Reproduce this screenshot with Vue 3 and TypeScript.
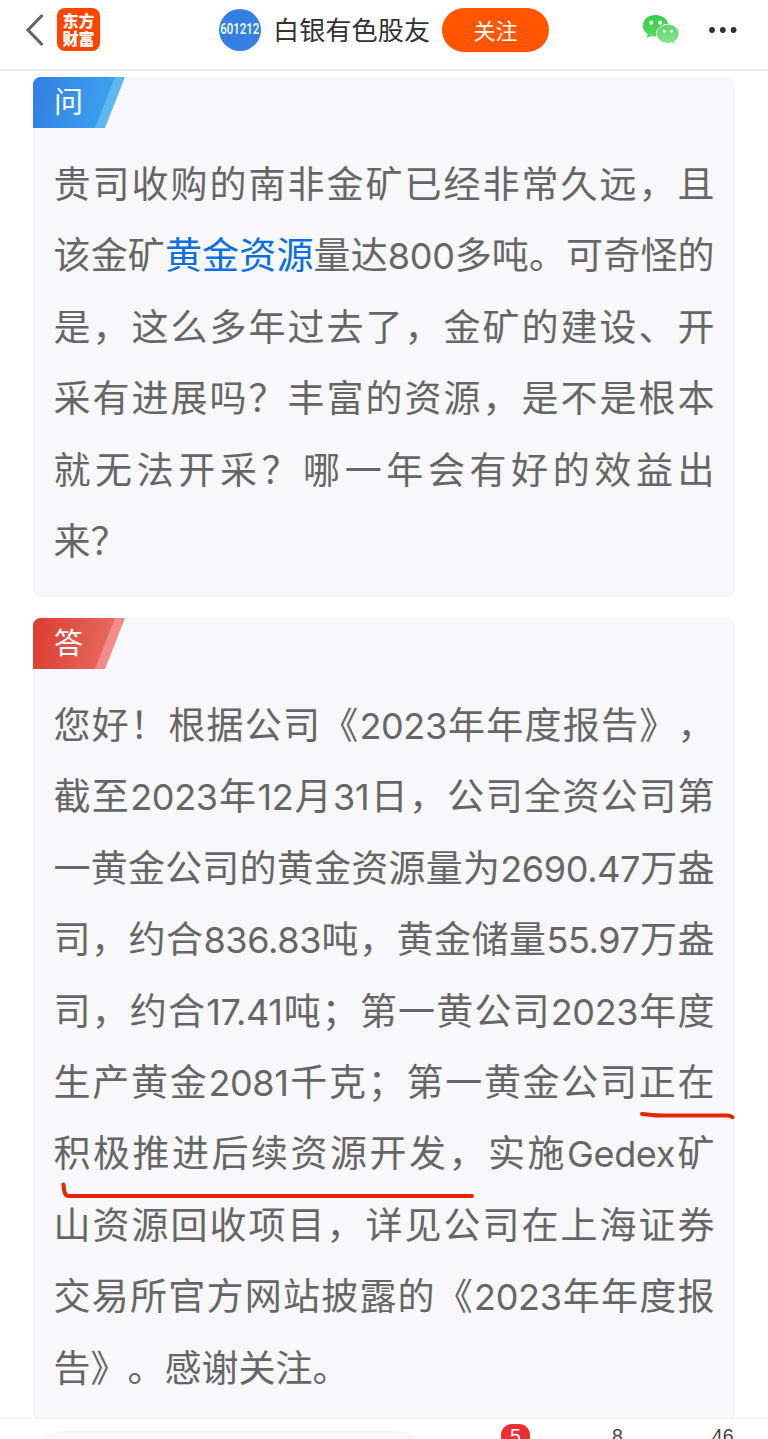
<script setup lang="ts">
interface Segment {
  text: string
  kind: 'cjk' | 'latin' | 'link'
}
interface Line {
  segments: Segment[]
  loose: boolean
}

// Digits and Latin words get their own run; text in [brackets] is a link.
function toLine(source: string, loose = false): Line {
  const parts = source.match(/\[[^\]]+\]|[A-Za-z0-9.]+|[^A-Za-z0-9.[\]]+/g) ?? []
  const segments = parts.map((part): Segment => {
    if (part.startsWith('[')) return { text: part.slice(1, -1), kind: 'link' }
    return { text: part, kind: /^[A-Za-z0-9]/.test(part) ? 'latin' : 'cjk' }
  })
  return { segments, loose }
}

const question: Line[] = [
  toLine('贵司收购的南非金矿已经非常久远，且'),
  toLine('该金矿[黄金资源]量达800多吨。可奇怪的'),
  toLine('是，这么多年过去了，金矿的建设、开'),
  toLine('采有进展吗？丰富的资源，是不是根本'),
  toLine('就无法开采？哪一年会有好的效益出'),
  toLine('来？', true),
]

const answer: Line[] = [
  toLine('您好！根据公司《2023年年度报告》，'),
  toLine('截至2023年12月31日，公司全资公司第'),
  toLine('一黄金公司的黄金资源量为2690.47万盎'),
  toLine('司，约合836.83吨，黄金储量55.97万盎'),
  toLine('司，约合17.41吨；第一黄公司2023年度'),
  toLine('生产黄金2081千克；第一黄金公司正在'),
  toLine('积极推进后续资源开发，实施Gedex矿'),
  toLine('山资源回收项目，详见公司在上海证券'),
  toLine('交易所官方网站披露的《2023年年度报'),
  toLine('告》。感谢关注。', true),
]
</script>

<template>
  <div class="page">
    <header class="top">
      <svg class="back" width="20" height="34" viewBox="0 0 20 34"><path d="M17.500 2 3 17l14.500 15" /></svg>
      <div class="logo"><span>东方</span><span>财富</span></div>
      <div class="avatar"><span>601212</span></div>
      <div class="name">白银有色股友</div>
      <button class="follow">关注</button>
      <svg class="wechat" width="38" height="32" viewBox="0 0 38 32">
        <defs>
          <linearGradient id="wg1" x1="0" y1="0" x2="0" y2="1"><stop offset="0" stop-color="#32cb45" /><stop offset="1" stop-color="#5bd967" /></linearGradient>
          <linearGradient id="wg2" x1="0" y1="0" x2="0" y2="1"><stop offset="0" stop-color="#5ed66b" /><stop offset="1" stop-color="#8be692" /></linearGradient>
        </defs>
        <path fill="url(#wg1)" d="M13.300 1C6.300 1 .8 5.700.8 11.700c0 3.400 1.800 6.300 4.700 8.300l-.7 4.200 4.600-2.400c1.400.4 2.900.6 4.400.6 7.100 0 12.800-4.700 12.800-10.500S20.900 1 13.300 1Z" />
        <path fill="url(#wg2)" stroke="#fff" stroke-width="1" d="M25.800 10.300c-6.300 0-11.400 4.200-11.400 9.500s5.100 9.500 11.400 9.500c1.400 0 2.700-.2 3.900-.6l4 2-1-3.400c2.900-1.800 4.500-4.500 4.500-7.500 0-5.300-5.100-9.500-11.400-9.500Z" />
        <g fill="#fff"><circle cx="9.200" cy="8.700" r="2.100" /><circle cx="18.200" cy="8.700" r="2.100" /><circle cx="22.300" cy="17.200" r="1.500" /><circle cx="29.500" cy="17.200" r="1.500" /></g>
      </svg>
      <svg class="more" width="28" height="6" viewBox="0 0 28 6"><circle cx="3" cy="3" r="2.900" /><circle cx="13.800" cy="3" r="2.900" /><circle cx="24.600" cy="3" r="2.900" /></svg>
    </header>

    <main class="content">
      <section class="card">
        <div class="tag ask"><span>问</span></div>
        <div class="body">
          <p v-for="(line, i) in question" :key="i" :class="['line', { loose: line.loose }]"><span v-for="(s, j) in line.segments" :key="j" :class="s.kind">{{ s.text }}</span></p>
        </div>
      </section>
      <section class="card reply">
        <div class="tag ans"><span>答</span></div>
        <div class="body">
          <p v-for="(line, i) in answer" :key="i" :class="['line', { loose: line.loose }]"><span v-for="(s, j) in line.segments" :key="j" :class="s.kind">{{ s.text }}</span></p>
        </div>
        <svg class="marks" width="702" height="100" viewBox="0 0 702 100">
          <path d="M609 14c7 .4 11 1.500 20 1.500h65c3 0 4 .4 5.500 1.700" />
          <path d="M30.500 84.500c.5 6 .8 11.500 5.500 11.500h403" />
        </svg>
      </section>
    </main>

    <footer class="bottom">
      <div class="input"></div>
      <div class="badge">5</div>
      <div class="count likes">8</div>
      <div class="count shares">46</div>
    </footer>
  </div>
</template>

<style>
body {
  margin: 0;
  background: #fff;
}
</style>

<style scoped>
.page {
  width: 768px;
  height: 1439px;
  overflow: hidden;
  display: flex;
  flex-direction: column;
  background: #fff;
  font-family: Inter, "Noto Sans CJK SC", sans-serif;
  text-spacing-trim: space-all;
}
.top {
  box-sizing: border-box;
  height: 71px;
  flex: none;
  display: flex;
  align-items: center;
  padding: 0 31px 10px 25px;
  border-bottom: 2px solid #ededee;
}
.back {
  fill: none;
  stroke: #666;
  stroke-width: 3.2;
  margin-top: 1px;
}
.logo {
  width: 43px;
  height: 43px;
  margin-left: 12px;
  border-radius: 8px;
  background: #ff4400;
  color: #fff;
  font-size: 16px;
  font-weight: 900;
  line-height: 18px;
  display: flex;
  flex-direction: column;
  align-items: center;
  justify-content: center;
}
.avatar {
  width: 42px;
  height: 42px;
  margin: 1px 0 0 119px;
  border-radius: 50%;
  background: #3380e2;
  color: #fff;
  font: 500 14.5px/41px Roboto, sans-serif;
  display: flex;
  justify-content: center;
}
.avatar span {
  transform: scaleX(0.79);
}
.name {
  width: 160px;
  margin-left: 12px;
  font-size: 26.2px;
  line-height: 40px;
  margin-top: 3px;
  color: #333;
  white-space: nowrap;
}
.follow {
  width: 107px;
  height: 44px;
  margin-left: 9px;
  margin-top: 1px;
  padding: 0 0 2px;
  border: 0;
  border-radius: 22px;
  background: #ff5500;
  color: #fff;
  font: 22px/42px "Noto Sans CJK SC", sans-serif;
}
.wechat {
  margin-left: 93px;
  margin-top: 1px;
}
.more {
  margin-left: auto;
  fill: #333;
}
.content {
  flex: 1;
  min-height: 0;
  overflow: hidden;
  padding: 6px 33px 0;
}
.card {
  position: relative;
  box-sizing: border-box;
  height: 520px;
  border-radius: 8px;
  background: #f8f8fa;
  overflow: hidden;
}
.reply {
  margin-top: 21px;
  height: 900px;
}
.tag {
  width: 92px;
  height: 51px;
  clip-path: polygon(0 0, 100% 0, 72px 100%, 0 100%);
  color: #fff;
  font-size: 29px;
  line-height: 52px;
}
.tag span {
  display: block;
  height: 51px;
  padding-left: 21px;
  clip-path: polygon(0 0, 82px 0, 62px 100%, 0 100%);
}
.ask {
  background: #5eb8f0;
}
.ask span {
  background: linear-gradient(100deg, #337fe2, #3ba2ee 82px);
}
.ans {
  background: #f38b8b;
}
.ans span {
  background: linear-gradient(100deg, #db3d31, #e5695f 82px);
}
.body {
  padding: 21px 20.5px 0 20.5px;
}
.line {
  margin: 0;
  height: 71.4px;
  font-size: 37px;
  line-height: 71.4px;
  color: #666;
  white-space: nowrap;
  text-align: justify;
  text-align-last: justify;
}
.line.loose {
  text-align-last: left;
}
.latin {
  font-size: 36px;
  letter-spacing: -0.35px;
}
.link {
  color: #0a6fe0;
}
.marks {
  position: absolute;
  left: 0;
  top: 482px;
  fill: none;
  stroke: #e62600;
  stroke-width: 4;
  stroke-linecap: round;
}
.bottom {
  box-sizing: border-box;
  height: 21px;
  flex: none;
  display: flex;
  align-items: flex-start;
  border-top: 1px solid #f3f3f4;
  padding-left: 33px;
  overflow: hidden;
  font: 19.5px/24px "Liberation Sans", sans-serif;
}
.input {
  width: 394px;
  height: 60px;
  margin-top: 12px;
  border-radius: 30px;
  background: #f8f8f8;
}
.badge {
  width: 29px;
  height: 26px;
  margin: 5px 0 0 74px;
  border-radius: 11px;
  background: #e83030;
  color: #fff;
  text-align: center;
}
.count {
  margin-top: 5px;
  color: #444;
}
.likes {
  margin-left: 82px;
}
.shares {
  margin-left: 89px;
}
</style>
